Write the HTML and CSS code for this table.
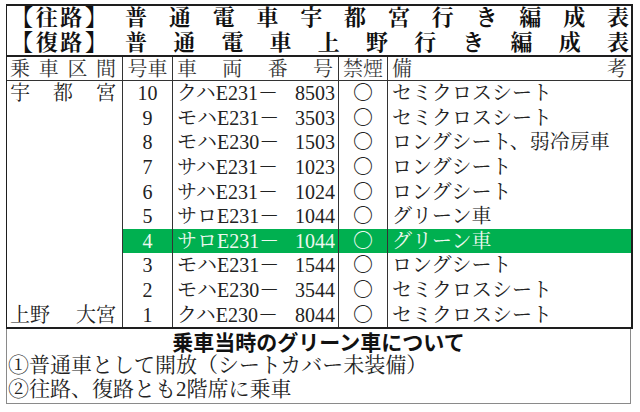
FILE: index.html
```html
<!DOCTYPE html>
<html lang="ja">
<head>
<meta charset="utf-8">
<link rel="stylesheet" href="styles.css">
</head>
<body>
<div class="page">
  <div class="sheet">
    <div class="title">
      <div class="trow">
        <span class="tag dist"><span class="ob">【</span><span>往</span><span>路</span><span class="cb">】</span></span>
        <span class="dist main"><span>普</span><span>通</span><span>電</span><span>車</span><span>宇</span><span>都</span><span>宮</span><span>行</span><span>き</span><span>編</span><span>成</span><span>表</span></span>
      </div>
      <div class="trow">
        <span class="tag dist"><span class="ob">【</span><span>復</span><span>路</span><span class="cb">】</span></span>
        <span class="dist main"><span>普</span><span>通</span><span>電</span><span>車</span><span>上</span><span>野</span><span>行</span><span>き</span><span>編</span><span>成</span><span>表</span></span>
      </div>
    </div>
    <div class="grid">
      <div class="cell head c1 dist"><span>乗</span><span>車</span><span>区</span><span>間</span></div>
      <div class="cell head c2 center">号車</div>
      <div class="cell head c3 dist"><span>車</span><span>両</span><span>番</span><span>号</span></div>
      <div class="cell head c4 center">禁煙</div>
      <div class="cell head c5 dist"><span>備</span><span>考</span></div>

      <div class="sect">
        <div class="dist sline"><span>宇</span><span>都</span><span>宮</span></div>
        <div class="dist sline"><span>上野</span><span>大宮</span></div>
      </div>

      <div class="cell c2 center">10</div><div class="cell c3 car"><span>クハE231－</span><span>8503</span></div><div class="cell c4 center">〇</div><div class="cell c5 note-c">セミクロスシート</div>
      <div class="cell c2 center">9</div><div class="cell c3 car"><span>モハE231－</span><span>3503</span></div><div class="cell c4 center">〇</div><div class="cell c5 note-c">セミクロスシート</div>
      <div class="cell c2 center">8</div><div class="cell c3 car"><span>モハE230－</span><span>1503</span></div><div class="cell c4 center">〇</div><div class="cell c5 note-c">ロングシート、弱冷房車</div>
      <div class="cell c2 center">7</div><div class="cell c3 car"><span>サハE231－</span><span>1023</span></div><div class="cell c4 center">〇</div><div class="cell c5 note-c">ロングシート</div>
      <div class="cell c2 center">6</div><div class="cell c3 car"><span>サハE231－</span><span>1024</span></div><div class="cell c4 center">〇</div><div class="cell c5 note-c">ロングシート</div>
      <div class="cell c2 center">5</div><div class="cell c3 car"><span>サロE231－</span><span>1044</span></div><div class="cell c4 center">〇</div><div class="cell c5 note-c">グリーン車</div>
      <div class="cell c2 center hl">4</div><div class="cell c3 car hl"><span>サロE231－</span><span>1044</span></div><div class="cell c4 center hl">〇</div><div class="cell c5 note-c hl">グリーン車</div>
      <div class="cell c2 center">3</div><div class="cell c3 car"><span>モハE231－</span><span>1544</span></div><div class="cell c4 center">〇</div><div class="cell c5 note-c">ロングシート</div>
      <div class="cell c2 center">2</div><div class="cell c3 car"><span>モハE230－</span><span>3544</span></div><div class="cell c4 center">〇</div><div class="cell c5 note-c">セミクロスシート</div>
      <div class="cell c2 center">1</div><div class="cell c3 car"><span>クハE230－</span><span>8044</span></div><div class="cell c4 center">〇</div><div class="cell c5 note-c">セミクロスシート</div>
    </div>
  </div>
  <div class="note">
    <div class="note-title">乗車当時のグリーン車について</div>
    <div class="note-line">①普通車として開放（シートカバー未装備）</div>
    <div class="note-line">②往路、復路とも2階席に乗車</div>
  </div>
</div>
</body>
</html>
```
FILE: styles.css
```css
html, body {
  margin: 0;
  padding: 0;
  background: #ffffff;
}
.page {
  padding: 4px 0 0 6px;
  font-family: "Liberation Serif", "Noto Serif CJK JP", "Noto Sans CJK JP", serif;
  color: #222;
}
.sheet {
  width: 627px;
  box-sizing: border-box;
  border: 2px solid #1e1e1e;
  border-left-width: 1.5px;
}
.title {
  border-bottom: 2px solid #1e1e1e;
  color: #111;
  font-weight: 700;
  font-size: 22px;
}
.trow {
  display: flex;
  align-items: center;
  height: 24.5px;
  line-height: 24.5px;
  padding: 0 2px 0 4px;
}
.tag {
  width: 96px;
  white-space: nowrap;
}
.tag span {
  width: 22px;
  text-align: center;
}
.tag .ob {
  text-align: right;
}
.tag .cb {
  text-align: left;
}
.trow .main {
  flex: 1;
  margin-left: 18px;
}
.dist {
  display: flex;
  justify-content: space-between;
}
.grid {
  display: grid;
  grid-template-columns: 115px 50px 166px 49px 1fr;
  grid-template-rows: 24px repeat(10, 24.6px);
  font-size: 20px;
}
.cell {
  display: flex;
  align-items: center;
  white-space: nowrap;
  line-height: 20px;
}
.head {
  border-bottom: 1px solid #333;
  color: #333;
}
.c2, .c3, .c4, .c5 {
  border-left: 1px solid #333;
}
.c4 {
  font-weight: 300;
}
.head.c1 {
  padding: 0 6px 0 3px;
}
.head.c3 {
  padding: 0 5px 0 4px;
}
.head.c5 {
  padding: 0 4px 0 4px;
}
.center {
  justify-content: center;
}
.car {
  justify-content: space-between;
  padding: 0 3px 0 4px;
}
.note-c {
  padding-left: 4px;
}
.sect {
  grid-column: 1;
  grid-row: 2 / span 10;
  display: flex;
  flex-direction: column;
  justify-content: space-between;
}
.sline {
  height: 24.6px;
  align-items: center;
  padding: 0 6px 0 3px;
  line-height: 20px;
}
.hl {
  background: #00b050;
  color: #eef8f0;
}
.note {
  width: 625px;
  box-sizing: border-box;
  border: 1px solid #8a8a8a;
  border-top: none;
  height: 75px;
  font-size: 21px;
  color: #222;
}
.note-title {
  font-family: "Noto Sans CJK JP", "Noto Sans", sans-serif;
  font-weight: 700;
  font-size: 21px;
  text-align: center;
  height: 24px;
  line-height: 24px;
  color: #111;
}
.note-line {
  height: 24px;
  line-height: 24px;
  padding-left: 1px;
  white-space: nowrap;
}
```
